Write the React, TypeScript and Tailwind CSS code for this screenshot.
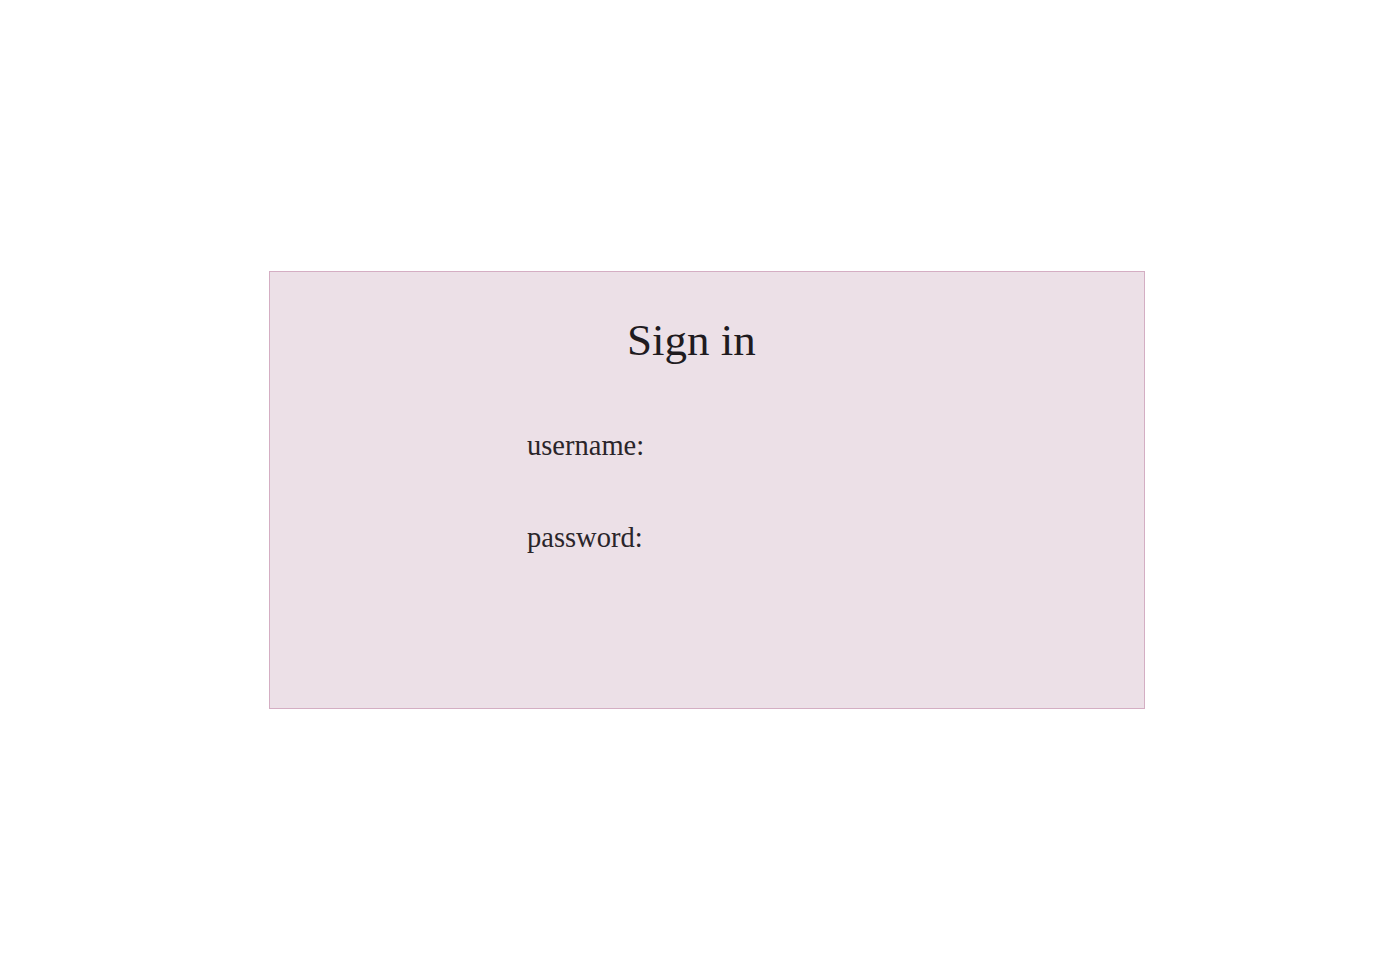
export default function App() {
  return (
    <div className="min-h-[980px] w-[1380px] bg-white pt-[271px] pl-[269px]" style={{ fontFamily: '"Liberation Serif", "DejaVu Serif", serif' }}>
      <div className="box-border h-[438px] w-[876px] border border-[#d4aec3] bg-[#ece0e7] text-[#1f1b1f]">
        <h1 className="pl-[357px] pt-[38px] text-[45px] font-normal leading-[60px]">Sign in</h1>
        <div className="pl-[257px] pt-[62px] flex flex-col gap-[64px] text-[#2a252a]">
          <div className="text-[28.5px] leading-[28px]">username:</div>
          <div className="text-[28.5px] leading-[28px]">password:</div>
        </div>
      </div>
    </div>
  );
}
